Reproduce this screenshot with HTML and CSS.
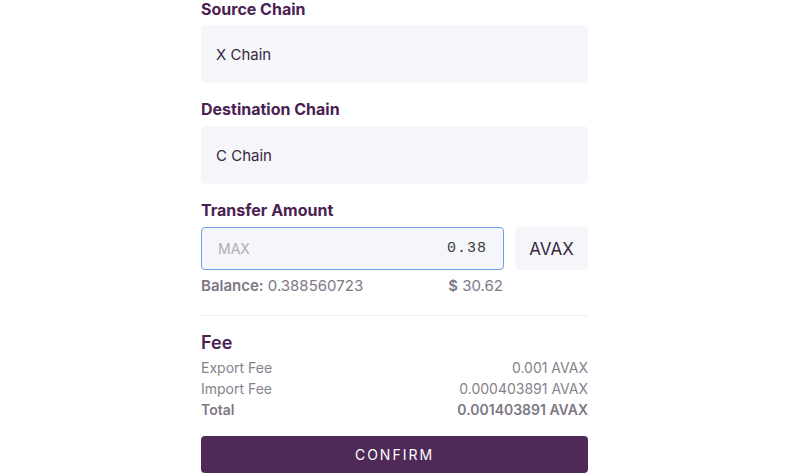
FILE: index.html
```html
<!DOCTYPE html>
<html>
<head>
	<title>Cross Chain</title>
	<meta charset="utf-8">
	<link rel="stylesheet" href="styles.css">
</head>
<body>
<div class="form">
	<div class="field">
		<label>Source Chain</label>
		<div class="select">X Chain</div>
	</div>
	<div class="field">
		<label>Destination Chain</label>
		<div class="select">C Chain</div>
	</div>
	<div class="field amount">
		<label>Transfer Amount</label>
		<div class="amount_row">
			<div class="amount_col">
				<div class="input">
					<span class="max">MAX</span>
					<span class="val">0.38</span>
				</div>
				<div class="balance">
					<span><b>Balance:</b> 0.388560723</span>
					<span><b>$</b> 30.62</span>
				</div>
			</div>
			<div class="ticker">AVAX</div>
		</div>
	</div>
	<hr>
	<div class="fees">
		<h4>Fee</h4>
		<div class="row"><span>Export Fee</span><span>0.001 AVAX</span></div>
		<div class="row"><span>Import Fee</span><span>0.000403891 AVAX</span></div>
		<div class="row total"><span>Total</span><span>0.001403891 AVAX</span></div>
	</div>
	<button class="confirm">CONFIRM</button>
</div>
</body>
</html>
```

FILE: styles.css
```css
*{
	margin: 0px;
	padding: 0px;
	box-sizing: border-box;
}
body{
	background-color: #fff;
	font-family: Inter, "Noto Sans", sans-serif;
	color: #3d2a46;
}
.form{
	width: 387px;
	margin-left: 201px;
}
.field{
	margin-bottom: 17px;
}
label{
	display: block;
	font-size: 16px;
	line-height: 18px;
	font-weight: 700;
	color: #4a2152;
	margin-bottom: 8px;
}
.field:first-child label{
	line-height: 17px;
	padding-top: 1px;
	margin-bottom: 7px;
}
.select{
	height: 58px;
	background-color: #f5f6fa;
	border-radius: 5px;
	padding: 0 15px;
	display: flex;
	align-items: center;
	font-size: 15px;
	color: #3a2743;
}
.field.amount{
	margin-bottom: 0px;
}
.amount_row{
	display: flex;
	gap: 11px;
}
.amount_col{
	width: 303px;
}
.input{
	height: 43px;
	border: 1px solid #6f9ce8;
	border-radius: 4px;
	background-color: #f5f6fa;
	display: flex;
	align-items: center;
	justify-content: space-between;
	padding: 0 16px;
}
.max{
	font-size: 14px;
	color: #b3abb9;
}
.val{
	font-family: "Liberation Mono", "DejaVu Sans Mono", monospace;
	font-size: 15px;
	color: #3a3a3a;
	letter-spacing: 1px;
}
.ticker{
	width: 73px;
	height: 43px;
	background-color: #f5f6fa;
	border-radius: 4px;
	display: flex;
	align-items: center;
	justify-content: center;
	font-size: 17px;
	color: #3a2743;
}
.balance{
	display: flex;
	justify-content: space-between;
	font-size: 15px;
	line-height: 18px;
	color: #7d7886;
	margin-top: 7px;
	padding-right: 1px;
}
.balance b{
	font-weight: 600;
}
hr{
	border: none;
	border-top: 1px solid #f0f0f3;
	margin: 20px 0 17px;
}
.fees h4{
	font-size: 18px;
	line-height: 20px;
	font-weight: 600;
	color: #4a2152;
	margin-bottom: 4px;
}
.row{
	display: flex;
	justify-content: space-between;
	font-size: 14px;
	line-height: 21px;
	color: #86828c;
}
.row.total{
	font-weight: 600;
	color: #7d7886;
}
.confirm{
	display: block;
	width: 387px;
	height: 37px;
	margin-top: 16px;
	border: none;
	border-radius: 4px;
	background-color: #4f2957;
	color: #fff;
	font-family: Inter, "Noto Sans", sans-serif;
	font-size: 14px;
	letter-spacing: 2px;
}
```
